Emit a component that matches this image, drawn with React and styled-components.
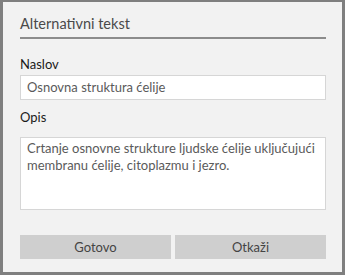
import React from 'react'
import styled, { createGlobalStyle } from 'styled-components'

const Global = createGlobalStyle`
  html, body { margin: 0; padding: 0; background: #f2f2f2; }
  body { font-family: Lato, "Open Sans", sans-serif; }
  * { box-sizing: border-box; }
`

const Frame = styled.div`
  width: 345px;
  height: 275px;
  border: 3px solid #7f7f7f;
  border-top-width: 2px;
  background: #f2f2f2;
  padding: 0 16px 0 17px;
  display: flex;
  flex-direction: column;
`

const Title = styled.div`
  font-size: 14.5px;
  color: #4a4a4a;
  padding: 14px 0 5px 0;
  line-height: 16px;
  border-bottom: 2px solid #8c8c8c;
`

const Label = styled.div`
  font-size: 13px;
  color: #1a1a1a;
  line-height: 16px;
  margin-top: ${p => p.$top}px;
  margin-bottom: ${p => p.$bottom}px;
`

const Field = styled.div`
  background: #fff;
  border: 1px solid #d6d6d6;
  color: #5a5a5a;
  font-size: 13px;
  height: ${p => p.$h}px;
  padding: ${p => (p.$multi ? '2px 6px' : '0 6px')};
  display: flex;
  align-items: ${p => (p.$multi ? 'flex-start' : 'center')};
  line-height: 17px;
`

const Buttons = styled.div`
  display: grid;
  grid-template-columns: 1fr 1fr;
  gap: 4px;
  margin-top: 25px;
`

const Button = styled.div`
  height: 24px;
  background: #cfcfcf;
  color: #444;
  font-size: 13px;
  display: flex;
  align-items: center;
  justify-content: center;
`

export default function App() {
  return (
    <>
      <Global />
      <Frame>
        <Title>Alternativni tekst</Title>
        <Label $top={17} $bottom={3}>Naslov</Label>
        <Field $h={25}>Osnovna struktura ćelije</Field>
        <Label $top={9} $bottom={12}>Opis</Label>
        <Field $h={73} $multi>
          Crtanje osnovne strukture ljudske ćelije uključujući membranu ćelije, citoplazmu i jezro.
        </Field>
        <Buttons>
          <Button>Gotovo</Button>
          <Button>Otkaži</Button>
        </Buttons>
      </Frame>
    </>
  )
}
